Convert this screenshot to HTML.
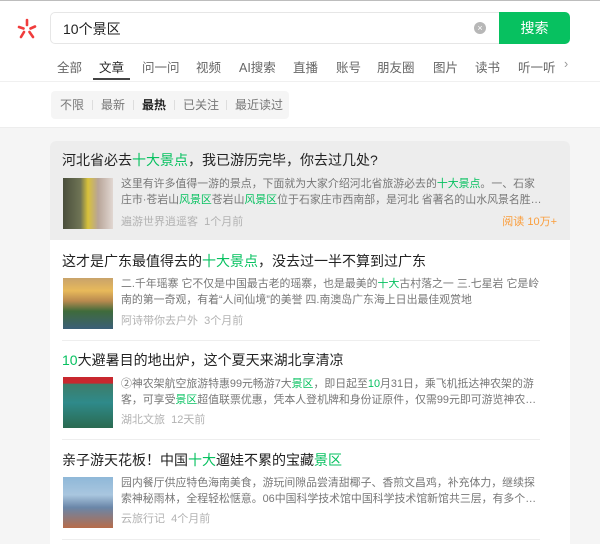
<!DOCTYPE html>
<html><head><meta charset="utf-8"><style>
*{margin:0;padding:0;box-sizing:border-box}
body{width:600px;height:544px;overflow:hidden;background:#f5f5f5;font-family:"Liberation Sans","Noto Sans CJK SC",sans-serif;position:relative}
.a{position:absolute;white-space:nowrap}
.top{position:absolute;left:0;top:0;width:600px;height:128px;background:#fff;border-top:1px solid #bdbdbd;border-bottom:1px solid #ededed}
.g{color:#07c160}
.tab{font-size:12.5px;color:#666;top:57px}
.f{font-size:12px;color:#777;top:96px}
.sep{position:absolute;top:100px;width:1px;height:10px;background:#ddd}
.t{font-size:14px;color:#222;left:62px}
.b{font-size:10.9px;color:#777;left:121px;line-height:16px;width:424px;height:32px;overflow:hidden;white-space:normal;display:-webkit-box;-webkit-line-clamp:2;-webkit-box-orient:vertical}
.m{font-size:11px;color:#b2b2b2;left:121px}
.img{position:absolute;left:63px;width:50px;height:51px}
.line{position:absolute;left:62px;width:478px;height:1px;background:#eee}
</style></head><body>
<div class="top"></div>
<svg class="a" style="left:16px;top:18px" width="22" height="22" viewBox="0 0 22 22">
<g stroke="#f03c3c" stroke-width="2.6" stroke-linecap="round">
<line x1="11" y1="2" x2="11" y2="7"/><line x1="3" y1="9" x2="7.5" y2="10.5"/><line x1="19" y1="8.5" x2="14.5" y2="10.5"/><line x1="8" y1="14" x2="5" y2="19"/><line x1="13.5" y1="14" x2="17" y2="19"/></g></svg>
<div class="a" style="left:50px;top:12px;width:450px;height:32px;border:1px solid #e6e6e6;border-right:none;border-radius:5px 0 0 5px;background:#fff"></div>
<div class="a" style="left:63px;top:19px;font-size:14px;color:#222">10个景区</div>
<div class="a" style="left:474px;top:22px;width:12px;height:12px;border-radius:50%;background:#b7b7b7;color:#fff;font-size:9px;line-height:12px;text-align:center">×</div>
<div class="a" style="left:499px;top:12px;width:71px;height:32px;background:#07c160;border-radius:0 5px 5px 0;color:#fff;font-size:14px;line-height:32px;text-align:center">搜索</div>
<div class="a tab" style="left:57px">全部</div>
<div class="a tab" style="left:99px;color:#222">文章</div>
<div class="a" style="left:93px;top:78px;width:37px;height:2px;background:#444"></div>
<div class="a tab" style="left:142px">问一问</div>
<div class="a tab" style="left:196px">视频</div>
<div class="a tab" style="left:239px">AI搜索</div>
<div class="a tab" style="left:293px">直播</div>
<div class="a tab" style="left:336px">账号</div>
<div class="a tab" style="left:377px">朋友圈</div>
<div class="a tab" style="left:433px">图片</div>
<div class="a tab" style="left:475px">读书</div>
<div class="a tab" style="left:518px">听一听</div>
<div class="a tab" style="left:564px;color:#999">›</div>
<div class="a" style="left:0;top:81px;width:600px;height:1px;background:#f0f0f0"></div>
<div class="a" style="left:51px;top:91px;width:238px;height:28px;background:#f5f5f5;border-radius:4px"></div>
<div class="a f" style="left:60px">不限</div><div class="sep" style="left:92px"></div>
<div class="a f" style="left:101px">最新</div><div class="sep" style="left:133px"></div>
<div class="a f" style="left:142px;color:#222;font-weight:bold">最热</div><div class="sep" style="left:174px"></div>
<div class="a f" style="left:183px">已关注</div><div class="sep" style="left:226px"></div>
<div class="a f" style="left:235px">最近读过</div>
<div class="a" style="left:50px;top:141px;width:520px;height:403px;background:#fff;border-radius:6px 6px 0 0"></div>
<div class="a" style="left:50px;top:141px;width:520px;height:99px;background:#ededed;border-radius:6px 6px 0 0"></div>

<div class="a t" style="top:150px">河北省必去<span class="g">十大景点</span>，我已游历完毕，你去过几处?</div>
<div class="img" style="top:178px;background:linear-gradient(90deg,#4a4f3c 0%,#6f7455 35%,#d8c23a 50%,#b8a598 70%,#e1d7d2 100%)"></div>
<div class="a b" style="top:176px">这里有许多值得一游的景点，下面就为大家介绍河北省旅游必去的<span class="g">十大景点</span>。一、石家庄市·苍岩山<span class="g">风景区</span>苍岩山<span class="g">风景区</span>位于石家庄市西南部，是河北 省著名的山水风景名胜区…</div>
<div class="a m" style="top:213px">遍游世界逍遥客 &nbsp;1个月前</div>
<div class="a" style="right:43px;top:213px;font-size:11px;color:#fa9d3b">阅读 10万+</div>

<div class="a t" style="top:251px">这才是广东最值得去的<span class="g">十大景点</span>，没去过一半不算到过广东</div>
<div class="img" style="top:278px;background:linear-gradient(180deg,#c9a36b 0%,#e8b95a 25%,#b98a4f 45%,#3f6b3b 65%,#3b5f78 100%)"></div>
<div class="a b" style="top:276px">二.千年瑶寨 它不仅是中国最古老的瑶寨，也是最美的<span class="g">十大</span>古村落之一 三.七星岩 它是岭南的第一奇观，有着“人间仙境”的美誉 四.南澳岛广东海上日出最佳观赏地</div>
<div class="a m" style="top:312px">阿诗带你去户外 &nbsp;3个月前</div>
<div class="line" style="top:340px"></div>

<div class="a t" style="top:350px"><span class="g">10</span>大避暑目的地出炉，这个夏天来湖北享清凉</div>
<div class="img" style="top:377px;background:linear-gradient(180deg,#c8282e 0%,#c8282e 12%,#3d7d6a 14%,#2f8a8a 50%,#2a6a50 100%)"></div>
<div class="a b" style="top:376px">②神农架航空旅游特惠99元畅游7大<span class="g">景区</span>，即日起至<span class="g">10</span>月31日，乘飞机抵达神农架的游客，可享受<span class="g">景区</span>超值联票优惠，凭本人登机牌和身份证原件，仅需99元即可游览神农架…</div>
<div class="a m" style="top:411px">湖北文旅 &nbsp;12天前</div>
<div class="line" style="top:439px"></div>

<div class="a t" style="top:450px">亲子游天花板！中国<span class="g">十大</span>遛娃不累的宝藏<span class="g">景区</span></div>
<div class="img" style="top:477px;background:linear-gradient(180deg,#8fb8d8 0%,#a9c6df 35%,#6a86a8 60%,#b76c4a 100%)"></div>
<div class="a b" style="top:475px">园内餐厅供应特色海南美食，游玩间隙品尝清甜椰子、香煎文昌鸡，补充体力，继续探索神秘雨林，全程轻松惬意。06中国科学技术馆中国科学技术馆新馆共三层，有多个主题…</div>
<div class="a m" style="top:510px">云旅行记 &nbsp;4个月前</div>
<div class="line" style="top:539px"></div>
</body></html>
